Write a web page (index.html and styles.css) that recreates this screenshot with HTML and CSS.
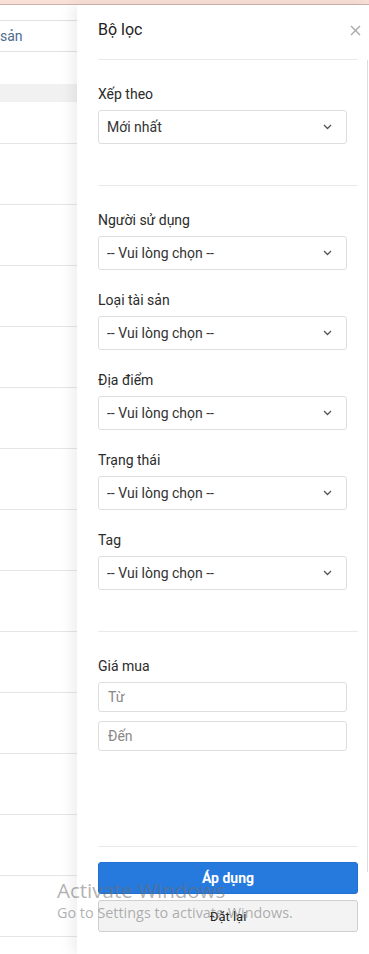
FILE: index.html
```html
<!DOCTYPE html>
<html lang="vi">
<head>
  <meta charset="UTF-8">
  <meta name="viewport" content="width=device-width, initial-scale=1.0">
  <title>Bộ lọc</title>
  <link rel="stylesheet" href="styles.css">
</head>
<body>

  <div class="topbar"></div>

  <div class="list">
    <div class="list-head">sản</div>
    <div class="list-band"></div>
    <div class="row row-first"></div>
    <div class="row"></div>
    <div class="row"></div>
    <div class="row"></div>
    <div class="row"></div>
    <div class="row"></div>
    <div class="row"></div>
    <div class="row"></div>
    <div class="row"></div>
    <div class="row"></div>
    <div class="row"></div>
    <div class="row"></div>
    <div class="row"></div>
    <div class="row"></div>
  </div>

  <aside class="panel">
    <div class="panel-head">
      <h2>Bộ lọc</h2>
      <svg class="close" width="11" height="11" viewBox="0 0 11 11">
        <path d="M1 1 L10 10 M10 1 L1 10" stroke="#a8a8a8" stroke-width="1.4" fill="none"/>
      </svg>
    </div>
    <div class="scroll-track"></div>

    <div class="divider"></div>
    <div class="section">
      <div class="field">
        <label>Xếp theo</label>
        <div class="select">
          <span>Mới nhất</span>
          <svg width="9" height="6" viewBox="0 0 9 6"><path d="M1 1 L4.5 4.5 L8 1" stroke="#555" stroke-width="1.3" fill="none"/></svg>
        </div>
      </div>
    </div>

    <div class="divider"></div>
    <div class="section">
      <div class="field">
        <label>Người sử dụng</label>
        <div class="select">
          <span>-- Vui lòng chọn --</span>
          <svg width="9" height="6" viewBox="0 0 9 6"><path d="M1 1 L4.5 4.5 L8 1" stroke="#555" stroke-width="1.3" fill="none"/></svg>
        </div>
      </div>
      <div class="field">
        <label>Loại tài sản</label>
        <div class="select">
          <span>-- Vui lòng chọn --</span>
          <svg width="9" height="6" viewBox="0 0 9 6"><path d="M1 1 L4.5 4.5 L8 1" stroke="#555" stroke-width="1.3" fill="none"/></svg>
        </div>
      </div>
      <div class="field">
        <label>Địa điểm</label>
        <div class="select">
          <span>-- Vui lòng chọn --</span>
          <svg width="9" height="6" viewBox="0 0 9 6"><path d="M1 1 L4.5 4.5 L8 1" stroke="#555" stroke-width="1.3" fill="none"/></svg>
        </div>
      </div>
      <div class="field">
        <label>Trạng thái</label>
        <div class="select">
          <span>-- Vui lòng chọn --</span>
          <svg width="9" height="6" viewBox="0 0 9 6"><path d="M1 1 L4.5 4.5 L8 1" stroke="#555" stroke-width="1.3" fill="none"/></svg>
        </div>
      </div>
      <div class="field">
        <label>Tag</label>
        <div class="select">
          <span>-- Vui lòng chọn --</span>
          <svg width="9" height="6" viewBox="0 0 9 6"><path d="M1 1 L4.5 4.5 L8 1" stroke="#555" stroke-width="1.3" fill="none"/></svg>
        </div>
      </div>
    </div>

    <div class="divider"></div>
    <div class="section section-price">
      <div class="field">
        <label>Giá mua</label>
        <input type="text" placeholder="Từ">
        <input type="text" placeholder="Đến">
      </div>
    </div>

    <div class="divider"></div>
    <div class="actions">
      <button class="btn btn-primary">Áp dụng</button>
      <button class="btn btn-default">Đặt lại</button>
    </div>
  </aside>

  <div class="watermark">
    <div class="wm-title">Activate Windows</div>
    <div class="wm-sub">Go to Settings to activate Windows.</div>
  </div>

</body>
</html>
```

FILE: styles.css
```css
body {
  margin: 0;
  font-family: Roboto, "Liberation Sans", sans-serif;
  background-color: #fff;
  color: #333;
  overflow: hidden;
}

.topbar {
  height: 4px;
  background-color: #f8e0d7;
  border-bottom: 1px solid #cbb6ad;
}

/* background list behind the drawer */
.list-head {
  margin-top: 15px;
  height: 30px;
  border-top: 1px solid #e2e2e2;
  border-bottom: 1px solid #e2e2e2;
  font-size: 14px;
  line-height: 30px;
  color: #4d6b8e;
}

.list-band {
  margin-top: 32px;
  height: 18px;
  background-color: #f1f1f1;
}

.row {
  height: 60px;
  border-bottom: 1px solid #e6e6e6;
}

.row-first {
  height: 41px;
}

/* drawer */
.panel {
  position: absolute;
  top: 5px;
  left: 77px;
  right: 0;
  bottom: 0;
  background-color: #fff;
  box-shadow: -5px 0 12px rgba(0, 0, 0, 0.07);
  padding-left: 21px;
}

.panel-head {
  display: flex;
  justify-content: space-between;
  align-items: flex-start;
  padding: 13px 8px 17px 0;
}

.panel-head h2 {
  margin: 0;
  font-size: 16px;
  line-height: 24px;
  font-weight: 400;
  color: #222;
}

.close {
  margin-top: 7px;
}

.scroll-track {
  position: absolute;
  top: 55px;
  right: 1px;
  width: 1px;
  height: 812px;
  background-color: #dcdcdc;
}

.divider {
  height: 1px;
  background-color: #e9e9e9;
  margin-right: 11px;
}

.section {
  padding: 24px 22px 41px 0;
}

.section-price {
  padding-bottom: 95px;
}

.field + .field {
  margin-top: 20px;
}

.field label {
  display: block;
  font-size: 14px;
  line-height: 20px;
  color: #2b2b2b;
  margin-bottom: 6px;
}

.select {
  display: flex;
  justify-content: space-between;
  align-items: center;
  box-sizing: border-box;
  height: 34px;
  padding: 0 14px 0 8px;
  border: 1px solid #dedede;
  border-radius: 3px;
  font-size: 14px;
  color: #333;
}

.field input {
  display: block;
  box-sizing: border-box;
  width: 100%;
  height: 30px;
  padding: 0 9px;
  border: 1px solid #dedede;
  border-radius: 3px;
  font-family: Roboto, "Liberation Sans", sans-serif;
  font-size: 14px;
  color: #333;
  margin-bottom: 9px;
}

.field input:last-child {
  margin-bottom: 0;
}

.field input::placeholder {
  color: #888;
}

.actions {
  padding: 15px 11px 0 0;
}

.btn {
  display: block;
  width: 100%;
  box-sizing: border-box;
  height: 32px;
  border-radius: 3px;
  font-family: Roboto, "Liberation Sans", sans-serif;
  cursor: pointer;
}

.btn-primary {
  background-color: #2679dd;
  border: 1px solid #2270d0;
  color: #fff;
  font-size: 14px;
  font-weight: 700;
}

.btn-default {
  margin-top: 6px;
  background-color: #f3f3f3;
  border: 1px solid #cfcfcf;
  color: #222;
  font-size: 13px;
}

.watermark {
  position: absolute;
  left: 57px;
  top: 877px;
  color: rgba(110, 110, 110, 0.55);
  font-family: "Open Sans", "Liberation Sans", sans-serif;
  pointer-events: none;
}

.wm-title {
  font-size: 20.5px;
  line-height: 26px;
}

.wm-sub {
  font-size: 14.4px;
  line-height: 20px;
}
```
